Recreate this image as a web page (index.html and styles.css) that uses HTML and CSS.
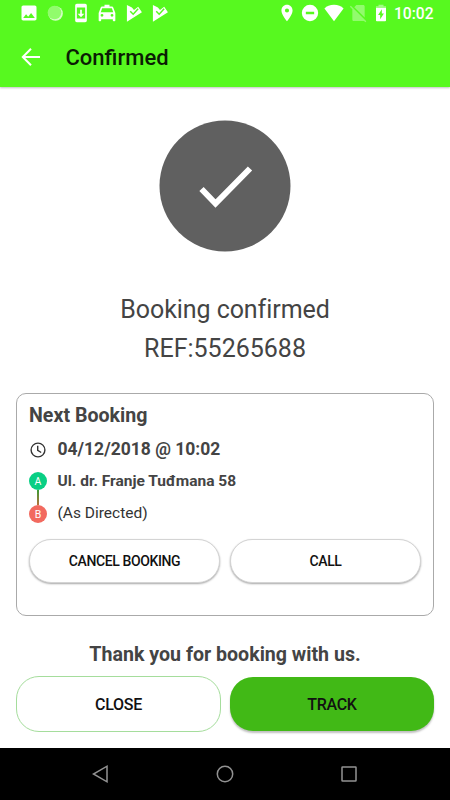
FILE: index.html
```html
<!DOCTYPE html>
<html lang="en">
<head>
    <meta charset="UTF-8">
    <meta name="viewport" content="width=device-width, initial-scale=1.0">
    <title>Confirmed</title>
    <link rel="stylesheet" href="styles.css">
</head>
<body>
    <header class="header">
        <div class="status-bar">
            <div class="notifications">
                <svg viewBox="0 0 24 24"><path d="M21 19V5c0-1.1-.9-2-2-2H5c-1.1 0-2 .9-2 2v14c0 1.1.9 2 2 2h14c1.1 0 2-.9 2-2zM8.5 13.5l2.5 3.01L14.5 12l4.5 6H5l3.5-4.5z"/></svg>
                <svg viewBox="0 0 24 24"><circle cx="12.6" cy="12.6" r="8.8" opacity=".75"/><circle class="sync-face" cx="11.4" cy="11.4" r="8.2"/></svg>
                <svg viewBox="0 0 24 24"><path fill-rule="evenodd" d="M7 1h10c1.1 0 2 .9 2 2v18c0 1.1-.9 2-2 2H7c-1.1 0-2-.9-2-2V3c0-1.1.9-2 2-2zm0 4.500v13h10v-13zM16 13h-3V8h-2v5H8l4 4z"/></svg>
                <svg viewBox="0 0 24 24"><path d="M19.5 5.500C19.2 4.700 18.600 4.300 18 4.300h-3V2H9v2.300H6c-.7 0-1.300.4-1.500 1.200L2 12v9c0 .6.4 1 1 1h1c.6 0 1-.4 1-1v-1.500h14V21c0 .6.4 1 1 1h1c.6 0 1-.4 1-1v-9zM6 16.500a1.700 1.700 0 1 1 0-3.400 1.700 1.700 0 0 1 0 3.400zm12 0a1.700 1.700 0 1 1 0-3.400 1.700 1.700 0 0 1 0 3.400zM4.500 11l1.700-4.700h11.600L19.500 11z"/></svg>
                <svg viewBox="0 0 24 24"><path d="M3.500 2.500L9.500 5.500 12 8.500 17 4.500 21.500 11 3.500 22.500V12z"/><path class="play-tick" d="M7.500 10l3.500 3.500 6-6.500"/></svg>
                <svg viewBox="0 0 24 24"><path d="M3.500 2.500L9.500 5.500 12 8.500 17 4.500 21.500 11 3.500 22.500V12z"/><path class="play-tick" d="M7.500 10l3.500 3.500 6-6.500"/></svg>
            </div>
            <div class="system">
                <svg viewBox="0 0 24 24"><path d="M12 2C8.130 2 5.300 5.130 5.300 9c0 5.250 6.700 13 6.700 13s6.700-7.750 6.700-13c0-3.870-2.830-7-6.700-7zm0 9.500a2.500 2.500 0 1 1 0-5 2.500 2.500 0 0 1 0 5z"/></svg>
                <svg viewBox="0 0 24 24"><path d="M12 2.200a9.800 9.800 0 1 0 0 19.600 9.800 9.800 0 0 0 0-19.600zm5 11.300H7v-3h10z"/></svg>
                <svg class="wifi" viewBox="0 0 26 24"><path d="M13 22L1.500 6.500C4.500 3.500 8 2 13 2s8.500 1.500 11.500 4.500z"/></svg>
                <svg class="no-sim" viewBox="0 0 24 24"><path d="M20 4c0-1-.8-1.700-1.700-1.700H10L7.500 5 20 17.500zM3.400 3.400L2.200 4.600l3 3V20c0 1 .8 1.700 1.700 1.700h12.400l1.500 1.500 1.200-1.200z"/></svg>
                <svg viewBox="0 0 24 24"><path opacity=".45" d="M9 2h6v2h3v2H6V4h3z"/><path fill-rule="evenodd" d="M6 6h12v15c0 .6-.4 1-1 1H7c-.6 0-1-.4-1-1zm7 1.500L8.500 14.500H11v5l4.500-7H13z"/></svg>
                <span class="time">10:02</span>
            </div>
        </div>
        <div class="app-bar">
            <svg class="back" viewBox="0 0 20 20"><path d="M19 10H2M10 1.800L1.800 10l8.200 8.200"/></svg>
            <h1>Confirmed</h1>
        </div>
    </header>

    <main class="content">
        <svg class="tick" viewBox="0 0 132 132">
            <circle cx="66" cy="66" r="65.500"/>
            <path d="M42.500 69l14 14.500 34.500-35"/>
        </svg>
        <p class="message">Booking confirmed</p>
        <p class="reference">REF:55265688</p>

        <section class="card">
            <h2>Next Booking</h2>
            <div class="booking">
                <div class="route">
                    <svg class="clock" viewBox="0 0 16 16"><circle cx="8" cy="8" r="6.900"/><path d="M7.700 3.800v4.600l3.500 2.100"/></svg>
                    <span class="pin pin-a">A</span>
                    <span class="line"></span>
                    <span class="pin pin-b">B</span>
                </div>
                <div class="details">
                    <p class="date">04/12/2018 @ 10:02</p>
                    <p class="pickup">Ul. dr. Franje Tuđmana 58</p>
                    <p class="dropoff">(As Directed)</p>
                </div>
            </div>
            <div class="card-actions">
                <button class="btn-small">CANCEL BOOKING</button>
                <button class="btn-small">CALL</button>
            </div>
        </section>

        <p class="thanks">Thank you for booking with us.</p>
        <div class="actions">
            <button class="btn btn-close">CLOSE</button>
            <button class="btn btn-track">TRACK</button>
        </div>
    </main>

    <nav class="nav-bar">
        <svg viewBox="0 0 20 20"><path d="M16 2.200v15.600L2.500 10z"/></svg>
        <svg viewBox="0 0 20 20"><circle cx="10" cy="10" r="7.700"/></svg>
        <svg viewBox="0 0 20 20"><rect x="3" y="3" width="14" height="14" rx=".5"/></svg>
    </nav>
</body>
</html>
```
FILE: styles.css
```css
* {
    box-sizing: border-box;
}
body {
    font-family: Roboto, "Liberation Sans", sans-serif;
    background-color: #fff;
    margin: 0;
    height: 800px;
    display: flex;
    flex-direction: column;
    overflow: hidden;
    color: #444;
}
h1, h2, p {
    margin: 0;
}
svg {
    display: block;
    flex: none;
}

/* header */
.header {
    height: 87px;
    flex: none;
    background-color: #57f91f;
    box-shadow: 0 1px 2px rgba(0, 0, 0, 0.25);
}
.status-bar {
    height: 27px;
    display: flex;
    justify-content: space-between;
    padding: 3px 16px 0 18.5px;
}
.notifications, .system {
    height: 20px;
    display: flex;
    align-items: center;
    fill: #fff;
}
.notifications {
    gap: 6.3px;
}
.notifications svg, .system svg {
    width: 20px;
    height: 20px;
}
.system {
    gap: 3px;
}
.system .wifi {
    width: 22px;
}
.system .no-sim {
    opacity: 0.35;
}
.sync-face {
    fill: #91fc6c;
}
.play-tick {
    fill: none;
    stroke: #57f91f;
    stroke-width: 1.8;
}
.time {
    width: 40px;
    padding-top: 2px;
    color: #fff;
    font-size: 15.6px;
    line-height: 20px;
    font-weight: 500;
}
.app-bar {
    height: 60px;
    display: flex;
    align-items: center;
    padding-left: 21px;
}
.back {
    width: 20px;
    height: 20px;
    fill: none;
    stroke: #fff;
    stroke-width: 2;
}
h1 {
    margin: 2px 0 0 24.5px;
    font-size: 22px;
    font-weight: 500;
    line-height: 30px;
    color: #0b1d04;
}

/* content */
.content {
    height: 661px;
    padding: 33px 16px 0;
    text-align: center;
}
.tick {
    width: 132px;
    height: 132px;
    margin: 0 auto;
    fill: #606060;
}
.tick path {
    fill: none;
    stroke: #fff;
    stroke-width: 6;
}
.message, .reference {
    font-size: 25px;
    line-height: 39px;
}
.message {
    margin-top: 38px;
    letter-spacing: -0.06px;
}
.card {
    height: 223px;
    margin-top: 25px;
    padding: 8px 12px 0;
    border: 1px solid #aaa;
    border-radius: 10px;
    text-align: left;
}
h2 {
    font-size: 19.6px;
    line-height: 28px;
    font-weight: 700;
}
.booking {
    height: 98px;
    margin-top: -1px;
    display: flex;
}
.route {
    width: 18px;
    margin-right: 10.5px;
    display: flex;
    flex-direction: column;
    align-items: center;
}
.clock {
    width: 16px;
    height: 16px;
    margin: 13px 0 14px;
    fill: none;
    stroke: #333;
    stroke-width: 1.4;
}
.pin {
    width: 18px;
    height: 18px;
    border-radius: 50%;
    color: #fff;
    font-size: 10.5px;
    line-height: 19px;
    text-align: center;
}
.pin-a {
    background-color: #09cf84;
}
.pin-b {
    background-color: #f26a5f;
}
.line {
    width: 2px;
    height: 15px;
    background: linear-gradient(#3a9d35, #b5713a);
}
.date {
    margin-top: 6px;
    font-size: 17.5px;
    line-height: 28px;
    font-weight: 700;
}
.pickup {
    font-size: 15.5px;
    line-height: 37px;
    font-weight: 700;
}
.dropoff {
    font-size: 15.5px;
    line-height: 27px;
    color: #333;
}
.card-actions {
    display: flex;
    gap: 10px;
    margin-top: 12px;
}
button {
    flex: 1;
    padding: 0;
    font-family: inherit;
    font-weight: 500;
    color: #111;
}
.btn-small {
    height: 44px;
    border: 1px solid #d4d4d4;
    border-radius: 22px;
    background-color: #fff;
    box-shadow: 0 1px 2px rgba(0, 0, 0, 0.35);
    font-size: 14px;
    letter-spacing: -0.4px;
}
.thanks {
    margin-top: 24px;
    font-size: 19.6px;
    line-height: 30px;
    font-weight: 700;
}
.actions {
    display: flex;
    gap: 9px;
    margin-top: 6px;
}
.btn {
    height: 56px;
    border-radius: 23px;
    font-size: 16px;
    letter-spacing: -0.3px;
}
.btn-close {
    border: 1px solid #a5dd9c;
    background-color: #fff;
    flex: none;
    width: 205px;
}
.btn-track {
    height: 54px;
    margin-top: 1px;
    border: none;
    background-color: #41b916;
    box-shadow: 0 2px 2px rgba(0, 0, 0, 0.25);
}

/* android navigation */
.nav-bar {
    height: 52px;
    flex: none;
    display: flex;
    align-items: center;
    justify-content: center;
    gap: 104px;
    background-color: #000;
}
.nav-bar svg {
    width: 20px;
    height: 20px;
    fill: none;
    stroke: #929292;
    stroke-width: 1.5;
}
```
